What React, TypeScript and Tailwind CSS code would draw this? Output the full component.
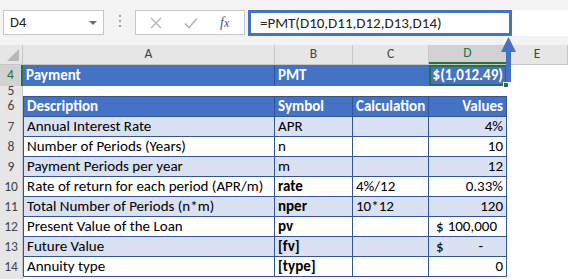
import React from 'react';

const font = { fontFamily: 'Calibri, Carlito, Lato, sans-serif' };

type Cell = { text?: string; bold?: boolean; align?: 'left' | 'right'; node?: React.ReactNode };

const cols = ['w-[252px]', 'w-[78px]', 'w-[76px]', 'w-[78px]'];

const rows: { n: number; cells: Cell[] }[] = [
  { n: 7, cells: [{ text: 'Annual Interest Rate' }, { text: 'APR' }, {}, { text: '4%', align: 'right' }] },
  { n: 8, cells: [{ text: 'Number of Periods (Years)' }, { text: 'n' }, {}, { text: '10', align: 'right' }] },
  { n: 9, cells: [{ text: 'Payment Periods per year' }, { text: 'm' }, {}, { text: '12', align: 'right' }] },
  {
    n: 10,
    cells: [{ text: 'Rate of return for each period (APR/m)' }, { text: 'rate', bold: true }, { text: '4%/12' }, { text: '0.33%', align: 'right' }],
  },
  {
    n: 11,
    cells: [{ text: 'Total Number of Periods (n*m)' }, { text: 'nper', bold: true }, { text: '10*12' }, { text: '120', align: 'right' }],
  },
  {
    n: 12,
    cells: [
      { text: 'Present Value of the Loan' },
      { text: 'pv', bold: true },
      {},
      {
        node: (
          <div className="flex w-full justify-between pl-[4px] pr-[6px]">
            <span>$</span>
            <span>100,000</span>
          </div>
        ),
      },
    ],
  },
  {
    n: 13,
    cells: [
      { text: 'Future Value' },
      { text: '[fv]', bold: true },
      {},
      {
        node: (
          <div className="flex w-full justify-between pl-[4px] pr-[20px]">
            <span>$</span>
            <span>-</span>
          </div>
        ),
      },
    ],
  },
  { n: 14, cells: [{ text: 'Annuity type' }, { text: '[type]', bold: true }, {}, { text: '0', align: 'right' }] },
];

const RowHead = ({ n, active }: { n: number | string; active?: boolean }) => (
  <div
    className={`flex w-[23px] shrink-0 items-center justify-center border-r text-[13.5px] ${
      active ? 'border-r-2 border-[#217346] bg-[#d2d2d2] text-[#217346]' : 'border-[#c6c6c6] bg-[#e6e6e6] text-[#444]'
    }`}>
    {n}
  </div>
);

export default function App() {
  return (
    <div className="relative h-[279px] w-[568px] overflow-hidden bg-white text-[#000]" style={font}>
      {/* toolbar */}
      <div className="flex h-[45px] items-start bg-[#f3f3f3] pl-[3px] pt-[10px]">
        <div className="flex h-[25px] w-[101px] items-center justify-between border border-[#c6c6c6] bg-white pl-[6px] pr-[6px] text-[14.5px] text-[#222]">
          <span>D4</span>
          <span className="h-0 w-0 border-x-[4px] border-t-[4px] border-x-transparent border-t-[#6d6d6d]" />
        </div>
        <div className="flex w-[31px] flex-col items-center gap-[3px] pt-[5px]">
          <span className="h-[2px] w-[2px] bg-[#a0a0a0]" />
          <span className="h-[2px] w-[2px] bg-[#a0a0a0]" />
          <span className="h-[2px] w-[2px] bg-[#a0a0a0]" />
        </div>
        <div className="flex h-[25px] w-[110px] items-center border border-[#c6c6c6] bg-white">
          <svg width="12" height="12" viewBox="0 0 12 12" className="ml-[14px]">
            <path d="M1 1 L11 11 M11 1 L1 11" stroke="#b4b4b4" strokeWidth="1.4" fill="none" />
          </svg>
          <svg width="14" height="12" viewBox="0 0 14 12" className="ml-[22px]">
            <path d="M1 6.5 L5 10.5 L13 1.5" stroke="#b4b4b4" strokeWidth="1.6" fill="none" />
          </svg>
          <span className="ml-[22px] text-[14px] italic text-[#555]" style={{ fontFamily: '"Liberation Serif", serif' }}>
            f<span className="text-[12px]">x</span>
          </span>
        </div>
        <div className="ml-[3px] flex h-[26px] flex-1 bg-white">
          <div className="flex h-full w-[264px] items-center border-[3px] border-[#4472c4] pl-[9px] text-[15px] text-[#222]">
            =PMT(D10,D11,D12,D13,D14)
          </div>
        </div>
      </div>

      {/* column headers */}
      <div className="flex h-[20px] border-b border-[#c6c6c6] bg-[#e6e6e6] text-[13.5px] text-[#444]">
        <div className="relative w-[23px] shrink-0 border-r border-[#c6c6c6]">
          <span className="absolute bottom-[3px] right-[3px] h-0 w-0 border-b-[12px] border-l-[12px] border-b-[#b8b8b8] border-l-transparent" />
        </div>
        <div className="flex w-[252px] items-center justify-center border-r border-[#c6c6c6]">A</div>
        <div className="flex w-[78px] items-center justify-center border-r border-[#c6c6c6]">B</div>
        <div className="flex w-[76px] items-center justify-center border-r border-[#c6c6c6]">C</div>
        <div className="flex w-[78px] items-center justify-center border-b-2 border-r border-b-[#217346] border-r-[#c6c6c6] bg-[#d2d2d2] text-[#217346]">
          D
        </div>
        <div className="flex w-[61px] items-center justify-center border-r border-[#c6c6c6]">E</div>
      </div>

      {/* row 4 */}
      <div className="flex h-[21px] text-[15px]">
        <RowHead n={4} active />
        <div className="flex w-[252px] items-center border-r border-[#2f5597] bg-[#4472c4] pl-[3px] font-bold text-white">Payment</div>
        <div className="flex w-[78px] items-center bg-[#4472c4] pl-[3px] font-bold text-white">PMT</div>
        <div className="w-[76px] bg-[#4472c4]" />
        <div className="relative flex w-[78px] items-center justify-end border-2 border-[#217346] bg-[#4472c4] pr-[2px] font-bold text-white">
          $(1,012.49)
          <span className="absolute -bottom-[4px] -right-[4px] h-[6px] w-[6px] border border-white bg-[#217346]" />
        </div>
      </div>

      {/* row 5 */}
      <div className="flex h-[10px] overflow-hidden">
        <RowHead n={5} />
      </div>

      {/* row 6 */}
      <div className="flex h-[21px] text-[15px]">
        <RowHead n={6} />
        {['Description', 'Symbol', 'Calculation', 'Values'].map((t, i) => (
          <div
            key={t}
            className={`${cols[i]} flex items-center border-y border-r border-[#2f5597] bg-[#4472c4] px-[3px] font-bold text-white ${
              i === 0 ? 'border-l' : ''
            } ${i === 3 ? 'justify-end' : ''}`}>
            {t}
          </div>
        ))}
      </div>

      {rows.map((r) => (
        <div key={r.n} className="flex h-[20px] text-[15px]">
          <RowHead n={r.n} />
          {r.cells.map((c, i) => (
            <div
              key={i}
              className={`${cols[i]} flex items-center border-b border-r border-[#2f5597] px-[3px] ${
                r.n % 2 ? 'bg-[#d9e1f2]' : 'bg-white'
              } ${i === 0 ? 'border-l' : ''} ${c.bold ? 'font-bold' : ''} ${c.align === 'right' ? 'justify-end' : ''}`}>
              {c.node ?? c.text}
            </div>
          ))}
        </div>
      ))}

      <div className="flex h-[10px] overflow-hidden">
        <div className="w-[23px] shrink-0 border-r border-[#c6c6c6] bg-[#e6e6e6]" />
      </div>

      {/* annotation arrow */}
      <svg className="absolute left-[500px] top-[36px]" width="18" height="48" viewBox="0 0 18 48">
        <rect x="6" y="14" width="5" height="32" fill="#4472c4" />
        <polygon points="1,16 8.5,1 16,16" fill="#4472c4" />
      </svg>
    </div>
  );
}
